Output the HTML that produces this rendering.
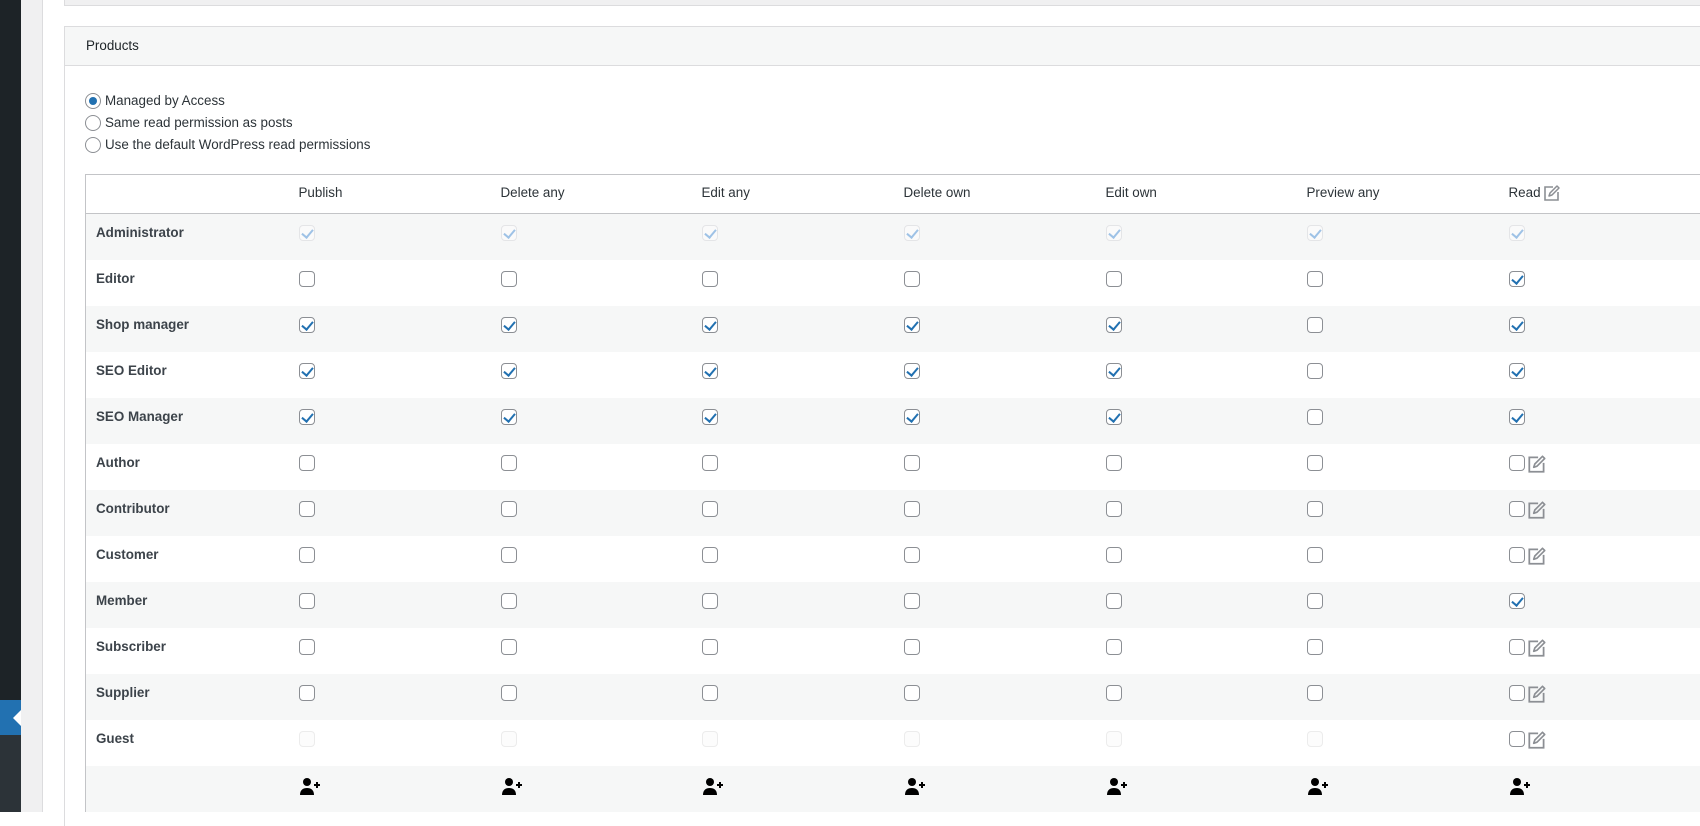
<!DOCTYPE html>
<html><head><meta charset="utf-8"><style>
*{box-sizing:border-box;margin:0;padding:0}
body{width:1700px;height:812px;overflow:hidden;background:#fff;font-family:"Liberation Sans",sans-serif;font-size:13.4px;color:#2c3338;position:relative}
.abs{position:absolute}
.cb{display:inline-block;width:16px;height:16px;border:1px solid #8c8f94;border-radius:4px;background:#fff;vertical-align:top;position:relative}
.cb.c::after{content:"";position:absolute;left:4px;top:1px;width:5px;height:9px;border:solid #2271b1;border-width:0 2px 2px 0;transform:rotate(40deg)}
.cb.d{border-color:#e4e5e7;background:#fafafa}
.cb.d::after{content:"";position:absolute;left:4px;top:1px;width:5px;height:9px;border:solid #9ec2e6;border-width:0 2px 2px 0;transform:rotate(40deg)}
.cb.g{border-color:#ececec;background:#fcfcfc}
table{position:absolute;left:85px;top:174px;border-collapse:collapse;table-layout:fixed;width:1700px;border-left:1px solid #c3c4c7;border-top:1px solid #c3c4c7}
td{height:46px;padding:0;vertical-align:top}
tr.h td{height:39px;padding-top:10px;border-bottom:1px solid #c3c4c7;color:#2c3338}
tr:nth-child(even) td{background:#f6f7f7}
td.l{padding-left:10px;font-weight:bold;color:#3c434a;padding-top:11px}
tr:not(.h) td:not(.l){padding-top:11px}
.e{display:inline-block;vertical-align:top;margin-left:1px;margin-top:-2px}
</style></head><body>
<div class="abs" style="left:0;top:0;width:21px;height:700px;background:#1d2327"></div>
<div class="abs" style="left:0;top:700px;width:21px;height:35px;background:#2271b1"></div>
<div class="abs" style="left:13px;top:710px;width:0;height:0;border-top:8px solid transparent;border-bottom:8px solid transparent;border-right:8px solid #fff"></div>
<div class="abs" style="left:0;top:735px;width:21px;height:77px;background:#2c3338"></div>
<div class="abs" style="left:21px;top:0;width:22px;height:812px;background:#f0f0f1;border-right:1px solid #dcdcde"></div>
<div class="abs" style="left:64px;top:0;width:1636px;height:6px;background:#f0f0f1;border-bottom:1px solid #dcdcde;border-left:1px solid #dcdcde"></div>
<div class="abs" style="left:64px;top:26px;width:1636px;height:800px;border-left:1px solid #dcdcde;border-top:1px solid #dcdcde"></div>
<div class="abs" style="left:65px;top:27px;width:1635px;height:39px;background:#f6f7f7;border-bottom:1px solid #dcdcde"></div>
<div class="abs" style="left:86px;top:38px;color:#1d2327">Products</div>
<div class="abs" style="left:85px;top:93px;width:16px;height:16px;border:1px solid #8c8f94;border-radius:50%"><div style="margin:3px;width:8px;height:8px;border-radius:50%;background:#2271b1"></div></div>
<div class="abs" style="left:85px;top:115px;width:16px;height:16px;border:1px solid #8c8f94;border-radius:50%"></div>
<div class="abs" style="left:85px;top:137px;width:16px;height:16px;border:1px solid #8c8f94;border-radius:50%"></div>
<div class="abs" style="left:105px;top:93px;line-height:16px">Managed by Access</div>
<div class="abs" style="left:105px;top:115px;line-height:16px">Same read permission as posts</div>
<div class="abs" style="left:105px;top:137px;line-height:16px">Use the default WordPress read permissions</div>
<svg width="0" height="0" style="position:absolute"><defs>
<symbol id="ed" viewBox="0 0 20 20"><path d="M11 4H3v13h13v-8" fill="none" stroke="#8c8f94" stroke-width="1.6"/><path d="M7 13l1-3 7-7 2 2-7 7z" fill="none" stroke="#8c8f94" stroke-width="1.5" stroke-linejoin="round"/></symbol>
<symbol id="us" viewBox="0 0 20 20"><circle cx="7" cy="5" r="4" fill="#000"/><path d="M0 18c0-5 3-7 7-7s7 2 7 7z" fill="#000"/><path d="M14 8h6M17 5v6" stroke="#000" stroke-width="2"/></symbol>
</defs></svg>
<table>
<colgroup><col style="width:213px"><col style="width:202px"><col style="width:201px"><col style="width:202px"><col style="width:202px"><col style="width:201px"><col style="width:202px"><col></colgroup>
<tr class="h"><td></td><td>Publish</td><td>Delete any</td><td>Edit any</td><td>Delete own</td><td>Edit own</td><td>Preview any</td><td>Read<svg class="e" width="20" height="20"><use href="#ed"/></svg></td></tr>
<tr><td class="l">Administrator</td><td><i class="cb d"></i></td><td><i class="cb d"></i></td><td><i class="cb d"></i></td><td><i class="cb d"></i></td><td><i class="cb d"></i></td><td><i class="cb d"></i></td><td><i class="cb d"></i></td></tr>
<tr><td class="l">Editor</td><td><i class="cb"></i></td><td><i class="cb"></i></td><td><i class="cb"></i></td><td><i class="cb"></i></td><td><i class="cb"></i></td><td><i class="cb"></i></td><td><i class="cb c"></i></td></tr>
<tr><td class="l">Shop manager</td><td><i class="cb c"></i></td><td><i class="cb c"></i></td><td><i class="cb c"></i></td><td><i class="cb c"></i></td><td><i class="cb c"></i></td><td><i class="cb"></i></td><td><i class="cb c"></i></td></tr>
<tr><td class="l">SEO Editor</td><td><i class="cb c"></i></td><td><i class="cb c"></i></td><td><i class="cb c"></i></td><td><i class="cb c"></i></td><td><i class="cb c"></i></td><td><i class="cb"></i></td><td><i class="cb c"></i></td></tr>
<tr><td class="l">SEO Manager</td><td><i class="cb c"></i></td><td><i class="cb c"></i></td><td><i class="cb c"></i></td><td><i class="cb c"></i></td><td><i class="cb c"></i></td><td><i class="cb"></i></td><td><i class="cb c"></i></td></tr>
<tr><td class="l">Author</td><td><i class="cb"></i></td><td><i class="cb"></i></td><td><i class="cb"></i></td><td><i class="cb"></i></td><td><i class="cb"></i></td><td><i class="cb"></i></td><td><i class="cb"></i><svg class="e" width="22" height="22"><use href="#ed"/></svg></td></tr>
<tr><td class="l">Contributor</td><td><i class="cb"></i></td><td><i class="cb"></i></td><td><i class="cb"></i></td><td><i class="cb"></i></td><td><i class="cb"></i></td><td><i class="cb"></i></td><td><i class="cb"></i><svg class="e" width="22" height="22"><use href="#ed"/></svg></td></tr>
<tr><td class="l">Customer</td><td><i class="cb"></i></td><td><i class="cb"></i></td><td><i class="cb"></i></td><td><i class="cb"></i></td><td><i class="cb"></i></td><td><i class="cb"></i></td><td><i class="cb"></i><svg class="e" width="22" height="22"><use href="#ed"/></svg></td></tr>
<tr><td class="l">Member</td><td><i class="cb"></i></td><td><i class="cb"></i></td><td><i class="cb"></i></td><td><i class="cb"></i></td><td><i class="cb"></i></td><td><i class="cb"></i></td><td><i class="cb c"></i></td></tr>
<tr><td class="l">Subscriber</td><td><i class="cb"></i></td><td><i class="cb"></i></td><td><i class="cb"></i></td><td><i class="cb"></i></td><td><i class="cb"></i></td><td><i class="cb"></i></td><td><i class="cb"></i><svg class="e" width="22" height="22"><use href="#ed"/></svg></td></tr>
<tr><td class="l">Supplier</td><td><i class="cb"></i></td><td><i class="cb"></i></td><td><i class="cb"></i></td><td><i class="cb"></i></td><td><i class="cb"></i></td><td><i class="cb"></i></td><td><i class="cb"></i><svg class="e" width="22" height="22"><use href="#ed"/></svg></td></tr>
<tr><td class="l">Guest</td><td><i class="cb g"></i></td><td><i class="cb g"></i></td><td><i class="cb g"></i></td><td><i class="cb g"></i></td><td><i class="cb g"></i></td><td><i class="cb g"></i></td><td><i class="cb"></i><svg class="e" width="22" height="22"><use href="#ed"/></svg></td></tr>
<tr><td class="l"></td><td><svg width="22" height="20"><use href="#us"/></svg></td><td><svg width="22" height="20"><use href="#us"/></svg></td><td><svg width="22" height="20"><use href="#us"/></svg></td><td><svg width="22" height="20"><use href="#us"/></svg></td><td><svg width="22" height="20"><use href="#us"/></svg></td><td><svg width="22" height="20"><use href="#us"/></svg></td><td><svg width="22" height="20"><use href="#us"/></svg></td></tr>
</table>
</body></html>
